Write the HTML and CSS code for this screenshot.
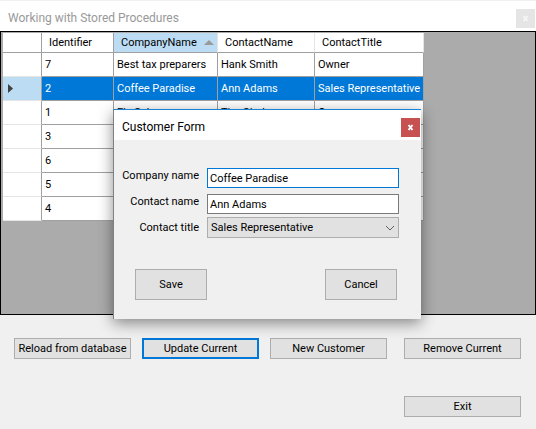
FILE: index.html
```html
<!DOCTYPE html>
<html lang="en">
<head>
<meta charset="utf-8">
<title>Working with Stored Procedures</title>
<link rel="stylesheet" href="styles.css">
</head>
<body>
<main class="window">
  <header class="titlebar">
    <h1 class="title title-inactive">Working with Stored Procedures</h1>
    <button class="close close-inactive" type="button" aria-label="Close window">
      <svg width="7" height="7" viewBox="0 0 7 7"><path d="M1.500 1L5.500 6M5.500 1L1.500 6" /></svg>
    </button>
  </header>

  <section class="grid-panel">
    <table class="grid">
      <colgroup><col class="col-mark"><col class="col-id"><col class="col-company"><col class="col-contact"><col class="col-title"></colgroup>
      <thead>
        <tr>
          <th></th><th>Identifier</th>
          <th class="sorted"><span class="sort-label">CompanyName<svg width="10" height="5" viewBox="0 0 10 5"><path d="M0 5L5 0L10 5Z" /></svg></span></th>
          <th>ContactName</th><th>ContactTitle</th>
        </tr>
      </thead>
      <tbody>
        <tr><th></th><td>7</td><td>Best tax preparers</td><td>Hank Smith</td><td>Owner</td></tr>
        <tr class="selected"><th><svg class="marker" width="5" height="9" viewBox="0 0 5 9"><path d="M0 0L5 4.500L0 9Z" /></svg></th><td>2</td><td>Coffee Paradise</td><td>Ann Adams</td><td>Sales Representative</td></tr>
        <tr><th></th><td>1</td><td>Fly Cakes</td><td>Tim Clark</td><td>Owner</td></tr>
        <tr><th></th><td>3</td><td></td><td></td><td></td></tr>
        <tr><th></th><td>6</td><td></td><td></td><td></td></tr>
        <tr><th></th><td>5</td><td></td><td></td><td></td></tr>
        <tr><th></th><td>4</td><td></td><td></td><td></td></tr>
      </tbody>
    </table>
  </section>

  <footer class="actions">
    <div class="action-row">
      <div class="action-group">
        <button class="btn" type="button">Reload from database</button>
        <button class="btn btn-default" type="button">Update Current</button>
        <button class="btn" type="button">New Customer</button>
      </div>
      <button class="btn" type="button">Remove Current</button>
    </div>
    <div class="action-row action-row-end">
      <button class="btn" type="button">Exit</button>
    </div>
  </footer>
</main>

<div class="dialog" role="dialog" aria-labelledby="dialog-title">
  <header class="titlebar">
    <h2 class="title" id="dialog-title">Customer Form</h2>
    <button class="close" type="button" aria-label="Close dialog">
      <svg width="7" height="7" viewBox="0 0 7 7"><path d="M1.500 1L5.500 6M5.500 1L1.500 6" /></svg>
    </button>
  </header>
  <form class="form">
    <div class="field">
      <label for="company">Company name</label>
      <input class="input input-active" id="company" type="text" value="Coffee Paradise">
    </div>
    <div class="field">
      <label for="contact">Contact name</label>
      <input class="input" id="contact" type="text" value="Ann Adams">
    </div>
    <div class="field field-select">
      <label for="role">Contact title</label>
      <div class="select-wrap">
        <select class="select" id="role"><option>Sales Representative</option><option>Owner</option></select>
        <svg class="chevron" width="10" height="6" viewBox="0 0 10 6"><path d="M1 1L5 5L9 1" /></svg>
      </div>
    </div>
    <div class="form-actions">
      <button class="btn btn-large" type="button">Save</button>
      <button class="btn btn-large" type="button">Cancel</button>
    </div>
  </form>
</div>
</body>
</html>
```
FILE: styles.css
```css
* {
  box-sizing: border-box;
}

body {
  margin: 0;
  background: #f0f0f0;
  color: #000;
  font: 11px/16px Roboto, sans-serif;
}

button,
input,
select {
  font: inherit;
  color: inherit;
}

/* Title bars */
.titlebar {
  display: flex;
  align-items: center;
  justify-content: space-between;
  height: 30px;
  padding: 4px 1px 0 8px;
  background: #fff;
}

.window > .titlebar {
  height: 31px;
  border-top: 1px solid #f0f0f0;
}

.title {
  margin: 0;
  font: 12px/16px Roboto, sans-serif;
}

.title-inactive {
  color: #999;
}

.close {
  display: flex;
  align-items: center;
  justify-content: center;
  width: 19px;
  height: 19px;
  padding: 0;
  border: 0;
  background: #c75050;
}

.close svg {
  fill: none;
  stroke: #fff;
  stroke-width: 2;
}

.close-inactive {
  background: #e5e5e5;
}

.close-inactive svg {
  stroke: #f5f5f5;
}

/* Data grid */
.grid-panel {
  height: 284px;
  padding: 1px 1px 1px 2px;
  border: 1px solid #000;
  background: #ababab;
}

.grid {
  width: 421px;
  table-layout: fixed;
  border-collapse: separate;
  border-spacing: 0;
  background: #fff;
}

.col-mark { width: 39px; }
.col-id { width: 72px; }
.col-company { width: 104px; }
.col-contact { width: 97px; }

.grid th,
.grid td {
  height: 24px;
  padding: 0 0 0 3px;
  border: 0 solid #a0a0a0;
  border-width: 0 1px 1px 0;
  font-weight: normal;
  text-align: left;
  white-space: nowrap;
}

.grid thead th {
  height: 20px;
  padding-left: 7px;
  border-right-color: #e5e5e5;
}

.grid thead th:first-child,
.grid thead th:nth-child(2) {
  border-right-color: #a0a0a0;
}

.grid tbody th {
  padding-left: 5px;
  border-bottom-color: #e5e5e5;
}

.grid .sorted,
.grid .selected th {
  background: #bcdcf4;
}

.grid .selected td {
  background: #0078d7;
  color: #fff;
}

.sort-label {
  display: flex;
  align-items: center;
  justify-content: space-between;
  padding-right: 3px;
}

.sort-label svg {
  fill: #999;
}

.marker {
  display: block;
  fill: #404040;
}

/* Buttons */
.btn {
  width: 117px;
  height: 21px;
  padding: 0;
  border: 1px solid #adadad;
  background: #e1e1e1;
  white-space: nowrap;
}

.btn-default {
  border: 2px solid #0078d7;
}

.btn-large {
  width: 72px;
  height: 31px;
}

.actions {
  display: flex;
  flex-direction: column;
  gap: 37px;
  padding: 23px 15px 12px 14px;
}

.action-row {
  display: flex;
  justify-content: space-between;
}

.action-row-end {
  justify-content: flex-end;
}

.action-group {
  display: flex;
  gap: 11px;
}

/* Customer dialog, floating over the window */
.dialog {
  position: absolute;
  top: 109px;
  left: 113px;
  width: 308px;
  border-top: 1px solid #1883d7;
  border-left: 1px solid #808080;
  background: #f0f0f0;
  box-shadow: 0 4px 14px rgba(0, 0, 0, 0.45);
}

.form {
  display: flex;
  flex-direction: column;
  padding: 28px 22px 19px 5px;
}

.field {
  display: grid;
  grid-template-columns: 80px 1fr;
  column-gap: 8px;
  align-items: start;
  margin-bottom: 6px;
}

.field:nth-child(2) {
  margin-bottom: 3px;
}

.field-select {
  align-items: center;
}

.field label {
  text-align: right;
  white-space: nowrap;
}

.input {
  width: 100%;
  height: 20px;
  padding: 0 2px;
  border: 1px solid #7a7a7a;
  background: #fff;
}

.input-active {
  border-color: #0078d7;
}

.select-wrap {
  position: relative;
}

.select {
  display: block;
  appearance: none;
  width: 100%;
  height: 21px;
  padding: 0 3px;
  border: 1px solid #adadad;
  border-radius: 0;
  background: #e1e1e1;
}

.chevron {
  position: absolute;
  top: 8px;
  right: 4px;
  fill: none;
  stroke: #606060;
  pointer-events: none;
}

.form-actions {
  display: flex;
  justify-content: space-between;
  padding: 25px 2px 0 16px;
}
```
